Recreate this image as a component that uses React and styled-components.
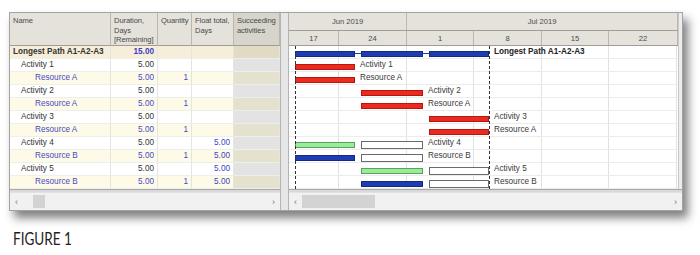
import React from "react";
import styled, { createGlobalStyle } from "styled-components";

const GlobalStyle = createGlobalStyle`
  html, body {
    margin: 0;
    padding: 0;
    background: #ffffff;
  }
  body {
    font-family: "Liberation Sans", Arial, sans-serif;
  }
`;

const ROW_H = 13;
const WEEK_W = 67.6;
const FIRST_WEEK_W = 50;

const rows = [
  { name: "Longest Path A1-A2-A3", kind: "path", dur: "15.00" },
  { name: "Activity 1", kind: "act", dur: "5.00" },
  { name: "Resource A", kind: "res", dur: "5.00", qty: "1" },
  { name: "Activity 2", kind: "act", dur: "5.00" },
  { name: "Resource A", kind: "res", dur: "5.00", qty: "1" },
  { name: "Activity 3", kind: "act", dur: "5.00" },
  { name: "Resource A", kind: "res", dur: "5.00", qty: "1" },
  { name: "Activity 4", kind: "act", dur: "5.00", float: "5.00" },
  { name: "Resource B", kind: "res", dur: "5.00", qty: "1", float: "5.00" },
  { name: "Activity 5", kind: "act", dur: "5.00", float: "5.00" },
  { name: "Resource B", kind: "res", dur: "5.00", qty: "1", float: "5.00" },
];

const S1 = [6, 66];
const S2 = [72, 134];
const S3 = [140, 200];

const gantt = [
  { bars: [["path", S1], ["path", S2], ["path", S3]], label: "Longest Path A1-A2-A3", bold: true, links: [[66, 72], [134, 140]] },
  { bars: [["red", S1]], label: "Activity 1" },
  { bars: [["red", S1]], label: "Resource A" },
  { bars: [["red", S2]], label: "Activity 2" },
  { bars: [["red", S2]], label: "Resource A" },
  { bars: [["red", S3]], label: "Activity 3" },
  { bars: [["red", S3]], label: "Resource A" },
  { bars: [["green", S1], ["outline", S2]], label: "Activity 4" },
  { bars: [["blue", S1], ["outline", S2]], label: "Resource B" },
  { bars: [["green", S2], ["outline", S3]], label: "Activity 5" },
  { bars: [["blue", S2], ["outline", S3]], label: "Resource B" },
];

const weeks = ["17", "24", "1", "8", "15", "22"];

const Page = styled.div`
  padding: 12px 0 0 9px;
`;

const Frame = styled.div`
  width: 672px;
  height: 197px;
  border: 1px solid #a3a3a3;
  display: flex;
  background: #f0f0f0;
  box-shadow: 5px 7px 9px rgba(0, 0, 0, 0.5);
`;

const LeftPanel = styled.div`
  width: 270px;
  display: flex;
  flex-direction: column;
`;

const Splitter = styled.div`
  width: 7px;
  background: #e6e6e6;
  border-left: 1px solid #b4b4b4;
  border-right: 1px solid #b4b4b4;
`;

const RightPanel = styled.div`
  flex: 1;
  display: flex;
  flex-direction: column;
`;

const TableGrid = styled.div`
  display: grid;
  grid-template-columns: 101px 47px 34px 42px 46px;
  grid-auto-rows: ${ROW_H}px;
  grid-template-rows: 33px;
  font-size: 8.2px;
`;

const HeadCell = styled.div`
  background: ${(p) => (p.$dark ? "#d6d4cb" : "#e4e2da")};
  border-right: 1px solid #b9b7ae;
  border-bottom: 1px solid #9f9d94;
  color: #4a4a4a;
  padding: 3px 2px 0 3px;
  line-height: 9.6px;
  font-size: 7.6px;
  letter-spacing: -0.1px;
  white-space: nowrap;
  overflow: hidden;
`;

const rowBg = {
  path: "#f6eed8",
  act: "#ffffff",
  res: "#fdfbe7",
};
const succBg = {
  path: "#e2dbc4",
  act: "#e3e3e3",
  res: "#e4e2cf",
};

const Cell = styled.div`
  background: ${(p) => (p.$succ ? succBg[p.$kind] : rowBg[p.$kind])};
  border-right: 1px solid #e4e4e0;
  border-bottom: 1px solid #eeeeea;
  box-sizing: border-box;
  padding: ${(p) => (p.$num ? "0 3px 0 0" : `0 0 0 ${p.$indent || 0}px`)};
  text-align: ${(p) => (p.$num ? "right" : "left")};
  line-height: 12px;
  white-space: nowrap;
  overflow: hidden;
  color: ${(p) =>
    p.$blue ? "#3e3ec4" : p.$kind === "res" ? "#4848c8" : "#333333"};
  font-weight: ${(p) => (p.$bold ? "bold" : "normal")};
`;

const Filler = styled.div`
  flex: 1;
  background: #d9d9d9;
  border-top: 1px solid #a9a9a9;
`;

const ScrollBar = styled.div`
  height: 17px;
  background: #f1f1f1;
  border-top: 1px solid #e2e2e2;
  display: flex;
  align-items: center;
  padding: 0 5px;
  font-size: 9px;
  color: #777;
`;

const Thumb = styled.div`
  width: ${(p) => p.$w}px;
  height: 13px;
  margin-left: ${(p) => p.$left}px;
  background: #d3d3d3;
`;

const Spacer = styled.div`
  flex: 1;
`;

const GanttWrap = styled.div`
  display: flex;
`;

const GanttMain = styled.div`
  width: 389px;
  display: flex;
  flex-direction: column;
  background: #ffffff;
`;

const RightStrip = styled.div`
  width: 3px;
  background: #ececec;
  border-left: 1px solid #c8c8c8;
`;

const HeaderRow = styled.div`
  display: flex;
  height: ${(p) => p.$h}px;
  background: #e4e2da;
  border-bottom: 1px solid #9f9d94;
  box-sizing: border-box;
`;

const HeadTime = styled.div`
  width: ${(p) => p.$w}px;
  flex-shrink: 0;
  border-right: 1px solid #b9b7ae;
  box-sizing: border-box;
  display: flex;
  align-items: center;
  justify-content: center;
  font-size: 7.6px;
  color: #4a4a4a;
`;

const Canvas = styled.div`
  position: relative;
  height: ${ROW_H * rows.length}px;
  background-image: linear-gradient(to right, transparent ${FIRST_WEEK_W - 1}px, #e2e2e2 ${FIRST_WEEK_W - 1}px, #e2e2e2 ${FIRST_WEEK_W}px, transparent ${FIRST_WEEK_W}px),
    repeating-linear-gradient(to right, transparent 0, transparent ${WEEK_W - 1}px, #e2e2e2 ${WEEK_W - 1}px, #e2e2e2 ${WEEK_W}px);
  background-position: 0 0, ${FIRST_WEEK_W}px 0;
  background-repeat: no-repeat, repeat-x;
`;

const GanttRow = styled.div`
  position: relative;
  height: ${ROW_H}px;
  border-bottom: 1px solid #ececec;
  box-sizing: border-box;
`;

const barStyles = {
  path: "background:#1f3db2;border:1px solid #142a80;height:4px;top:5px;",
  red: "background:#ee2a20;border:1px solid #b01a12;height:4px;top:5px;",
  blue: "background:#1f3db2;border:1px solid #142a80;height:4px;top:5px;",
  green: "background:#97ee97;border:1px solid #5e9e5e;height:4px;top:5px;",
  outline: "background:#ffffff;border:1px solid #6a6a6a;height:6px;top:4px;",
};

const Bar = styled.div`
  position: absolute;
  box-sizing: content-box;
  ${(p) => barStyles[p.$type]}
`;

const Link = styled.div`
  position: absolute;
  top: 7px;
  height: 1px;
  background: #1f3db2;
`;

const BarLabel = styled.div`
  position: absolute;
  top: 0;
  line-height: 12px;
  font-size: 8.2px;
  color: ${(p) => (p.$bold ? "#222" : "#3a3a3a")};
  font-weight: ${(p) => (p.$bold ? "bold" : "normal")};
  white-space: nowrap;
`;

const DashLine = styled.div`
  position: absolute;
  top: 0;
  bottom: 0;
  width: 0;
  border-left: 1px dashed #333;
`;

const Caption = styled.div`
  margin: 18px 0 0 4px;
  font-family: Lato, "Open Sans", sans-serif;
  font-size: 16.5px;
  color: #1e1e1e;
  transform: scaleX(0.82);
  transform-origin: left center;
`;

const App = () => {
  return (
    <Page>
      <GlobalStyle />
      <Frame>
        <LeftPanel>
          <TableGrid>
            <HeadCell>Name</HeadCell>
            <HeadCell>
              Duration,
              <br />
              Days
              <br />
              [Remaining]
            </HeadCell>
            <HeadCell>Quantity</HeadCell>
            <HeadCell>
              Float total,
              <br />
              Days
            </HeadCell>
            <HeadCell $dark>
              Succeeding
              <br />
              activities
            </HeadCell>
            {rows.map((r, i) => (
              <React.Fragment key={i}>
                <Cell
                  $kind={r.kind}
                  $bold={r.kind === "path"}
                  $indent={r.kind === "path" ? 3 : r.kind === "act" ? 11 : 25}
                >
                  {r.name}
                </Cell>
                <Cell $kind={r.kind} $num $bold={r.kind === "path"} $blue={r.kind === "path"}>
                  {r.dur}
                </Cell>
                <Cell $kind={r.kind} $num>
                  {r.qty || ""}
                </Cell>
                <Cell $kind={r.kind} $num $blue>
                  {r.float || ""}
                </Cell>
                <Cell $kind={r.kind} $succ />
              </React.Fragment>
            ))}
          </TableGrid>
          <Filler />
          <ScrollBar>
            <span>‹</span>
            <Thumb $left={15} $w={12} />
            <Spacer />
            <span>›</span>
          </ScrollBar>
        </LeftPanel>
        <Splitter />
        <RightPanel>
          <GanttWrap>
            <GanttMain>
              <HeaderRow $h={18}>
                <HeadTime $w={118}>Jun 2019</HeadTime>
                <HeadTime $w={271}>Jul 2019</HeadTime>
              </HeaderRow>
              <HeaderRow $h={15}>
                {weeks.map((w, i) => (
                  <HeadTime key={w} $w={i === 0 ? FIRST_WEEK_W : i === 5 ? 69 : i % 2 ? 68 : 67}>
                    {w}
                  </HeadTime>
                ))}
              </HeaderRow>
              <Canvas>
                {gantt.map((g, i) => {
                  const end = g.bars[g.bars.length - 1][1][1];
                  return (
                    <GanttRow key={i}>
                      {(g.links || []).map(([a, b]) => (
                        <Link key={a} style={{ left: a, width: b - a }} />
                      ))}
                      {g.bars.map(([type, [a, b]], j) => (
                        <Bar key={j} $type={type} style={{ left: a, width: b - a - 2 }} />
                      ))}
                      <BarLabel $bold={g.bold} style={{ left: end + 5 }}>
                        {g.label}
                      </BarLabel>
                    </GanttRow>
                  );
                })}
                <DashLine style={{ left: 6 }} />
                <DashLine style={{ left: 200 }} />
              </Canvas>
            </GanttMain>
            <RightStrip />
          </GanttWrap>
          <Filler />
          <ScrollBar>
            <span>‹</span>
            <Thumb $left={5} $w={73} />
            <Spacer />
            <span>›</span>
          </ScrollBar>
        </RightPanel>
      </Frame>
      <Caption>FIGURE 1</Caption>
    </Page>
  );
};

export default App;
